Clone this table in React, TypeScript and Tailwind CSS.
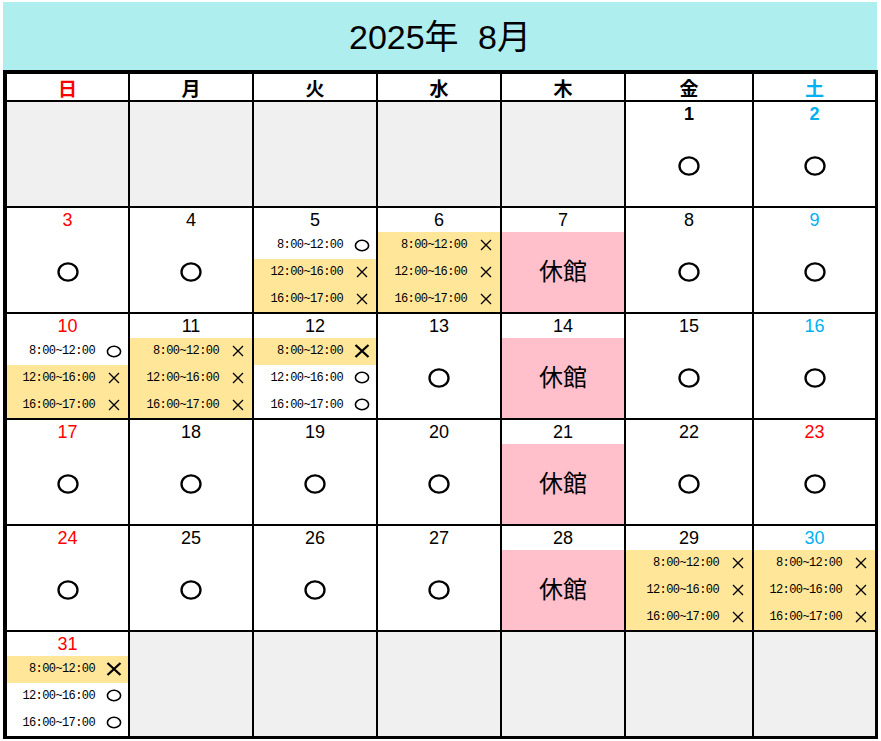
import React from 'react';

type Mark = 'o' | 'x' | 'X';
type Day =
    | { kind: 'empty' }
    | { kind: 'open'; date: number }
    | { kind: 'closed'; date: number }
    | { kind: 'slots'; date: number; marks: Mark[] };

const TIMES = ['8:00~12:00', '12:00~16:00', '16:00~17:00'];
const WEEK = ['日', '月', '火', '水', '木', '金', '土'];

const closedDates = [7, 14, 21, 28];
const slotDates: Record<number, Mark[]> = {
    5: ['o', 'x', 'x'],
    6: ['x', 'x', 'x'],
    10: ['o', 'x', 'x'],
    11: ['x', 'x', 'x'],
    12: ['X', 'o', 'o'],
    29: ['x', 'x', 'x'],
    30: ['x', 'x', 'x'],
    31: ['X', 'o', 'o'],
};
const redDates = [3, 10, 17, 23, 24, 31];
const blueDates = [2, 9, 16, 30];

const days: Day[] = [];
for (let i = 0; i < 5; i++) days.push({ kind: 'empty' });
for (let d = 1; d <= 31; d++) {
    if (closedDates.includes(d)) days.push({ kind: 'closed', date: d });
    else if (slotDates[d]) days.push({ kind: 'slots', date: d, marks: slotDates[d] });
    else days.push({ kind: 'open', date: d });
}
while (days.length < 42) days.push({ kind: 'empty' });

function BigCircle() {
    return (
        <svg width="24" height="22" viewBox="0 0 24 22">
            <ellipse cx="12" cy="11" rx="9.5" ry="8.6" fill="none" stroke="#000" strokeWidth="2.3" />
        </svg>
    );
}

function SlotMark({ mark }: { mark: Mark }) {
    if (mark === 'o') {
        return (
            <svg width="16" height="13" viewBox="0 0 16 13">
                <ellipse cx="8" cy="6.5" rx="6.6" ry="5.3" fill="none" stroke="#000" strokeWidth="1.6" />
            </svg>
        );
    }
    if (mark === 'X') {
        return (
            <svg width="16" height="14" viewBox="0 0 16 14">
                <path d="M1.5 1 L14.5 13 M14.5 1 L1.5 13" stroke="#000" strokeWidth="2.3" />
            </svg>
        );
    }
    return (
        <svg width="12" height="12" viewBox="0 0 12 12">
            <path d="M1 1 L11 11 M11 1 L1 11" stroke="#000" strokeWidth="1.3" />
        </svg>
    );
}

function DateNumber({ date }: { date: number }) {
    const color = redDates.includes(date)
        ? 'text-[#ff0000]'
        : blueDates.includes(date)
        ? 'text-[#00b0f0]'
        : 'text-black';
    const weight = date <= 2 ? 'font-bold' : 'font-normal';
    return (
        <div className={`h-[24px] flex items-center justify-center text-[18px] leading-none ${color} ${weight}`}>
            {date}
        </div>
    );
}

function DayCell({ day }: { day: Day }) {
    if (day.kind === 'empty') return <div className="bg-[#f0f0f0]" />;

    return (
        <div className="bg-white flex flex-col">
            <DateNumber date={day.date} />
            {day.kind === 'open' && (
                <div className="flex-1 flex items-center justify-center">
                    <BigCircle />
                </div>
            )}
            {day.kind === 'closed' && (
                <div className="flex-1 bg-[#ffc0cb] flex items-center justify-center text-[24px] leading-none text-black">
                    休館
                </div>
            )}
            {day.kind === 'slots' && (
                <div className="flex-1 grid grid-rows-3">
                    {day.marks.map((m, i) => (
                        <div
                            key={i}
                            className={`flex items-center justify-end gap-[7px] pr-[2px] ${m === 'o' ? 'bg-white' : 'bg-[#ffe699]'}`}
                        >
                            <span className="text-[12px] tracking-[-0.6px] leading-none font-['Liberation_Mono',monospace] text-black">
                                {TIMES[i]}
                            </span>
                            <div className="w-[24px] flex items-center justify-center">
                                <SlotMark mark={m} />
                            </div>
                        </div>
                    ))}
                </div>
            )}
        </div>
    );
}

export default function App() {
    return (
        <div className="min-h-screen bg-white pt-[2px] pl-[3px] font-['Liberation_Sans','Noto_Sans_CJK_JP',sans-serif]">
            <div className="w-[874px] h-[68px] bg-[#afeeee] flex items-center justify-center">
                <h1 className="text-[34px] leading-none text-black font-normal pt-[2px]">
                    2025年 <span className="ml-[10px]">8月</span>
                </h1>
            </div>

            <div className="w-[875px] grid grid-cols-[121px_122px_122px_122px_122px_126px_121px] grid-rows-[26px_repeat(6,104px)] gap-[2px] bg-black border-t-4 border-l-4 border-r-[3px] border-b-[3px] border-black">
                {WEEK.map((w, i) => (
                    <div
                        key={w}
                        className={`bg-white flex items-center justify-center text-[19px] font-bold leading-none font-['Noto_Sans_CJK_JP',sans-serif] ${
                            i === 0 ? 'text-[#ff0000]' : i === 6 ? 'text-[#00b0f0]' : 'text-black'
                        }`}
                    >
                        {w}
                    </div>
                ))}
                {days.map((d, i) => (
                    <DayCell key={i} day={d} />
                ))}
            </div>
        </div>
    );
}
